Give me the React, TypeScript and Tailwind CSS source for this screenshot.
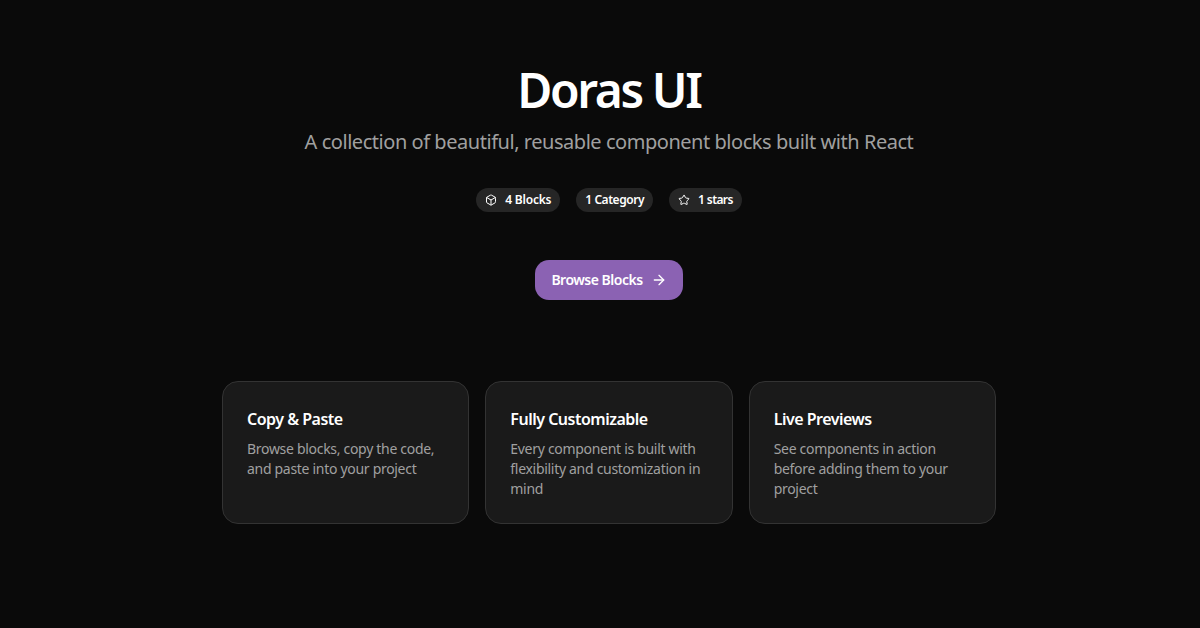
import { ArrowRight, Box, Star } from 'lucide-react';

const features = [
  { title: 'Copy & Paste', text: 'Browse blocks, copy the code, and paste into your project' },
  { title: 'Fully Customizable', text: 'Every component is built with flexibility and customization in mind' },
  { title: 'Live Previews', text: 'See components in action before adding them to your project' },
];

const App = () => {
  return (
    <div className="w-full h-[628px] overflow-hidden bg-[#0a0a0a] pl-[18px] pt-[60px] flex flex-col items-center font-['Noto_Sans','Open_Sans',sans-serif]">
      <h1 className="text-[48px] leading-[60px] font-[650] tracking-[-2.4px] text-white">Doras UI</h1>
      <p className="mt-[7px] text-[20px] leading-[30px] tracking-[-0.46px] text-[#a0a0a0]">
        A collection of beautiful, reusable component blocks built with React
      </p>

      <div className="mt-[31px] flex gap-4">
        <span className="h-6 px-[9px] rounded-full bg-[#262626] flex items-center gap-2 text-xs font-semibold tracking-[-0.2px] text-white">
          <Box size={12} />
          4 Blocks
        </span>
        <span className="h-6 px-[9px] rounded-full bg-[#262626] flex items-center text-xs font-semibold tracking-[-0.45px] text-white">
          1 Category
        </span>
        <span className="h-6 px-[9px] rounded-full bg-[#262626] flex items-center gap-2 text-xs font-semibold tracking-[-0.6px] text-white">
          <Star size={12} />
          1 stars
        </span>
      </div>

      <button className="mt-12 h-10 w-[148px] rounded-[14px] bg-[#8b62b3] flex items-center justify-center gap-2 text-sm font-semibold tracking-[-0.5px] text-white">
        Browse Blocks
        <ArrowRight size={16} />
      </button>

      <div className="mt-[81px] w-[774px] grid grid-cols-3 gap-4">
        {features.map((item) => (
          <div key={item.title} className="h-[143px] rounded-2xl border border-[#333333] bg-[#1a1a1a] px-6 pt-[25px]">
            <h3 className="text-base leading-6 font-semibold tracking-[-0.5px] text-white">{item.title}</h3>
            <p className="mt-2 text-sm leading-5 tracking-[-0.3px] text-[#a0a0a0]">{item.text}</p>
          </div>
        ))}
      </div>
    </div>
  );
};

export default App;
